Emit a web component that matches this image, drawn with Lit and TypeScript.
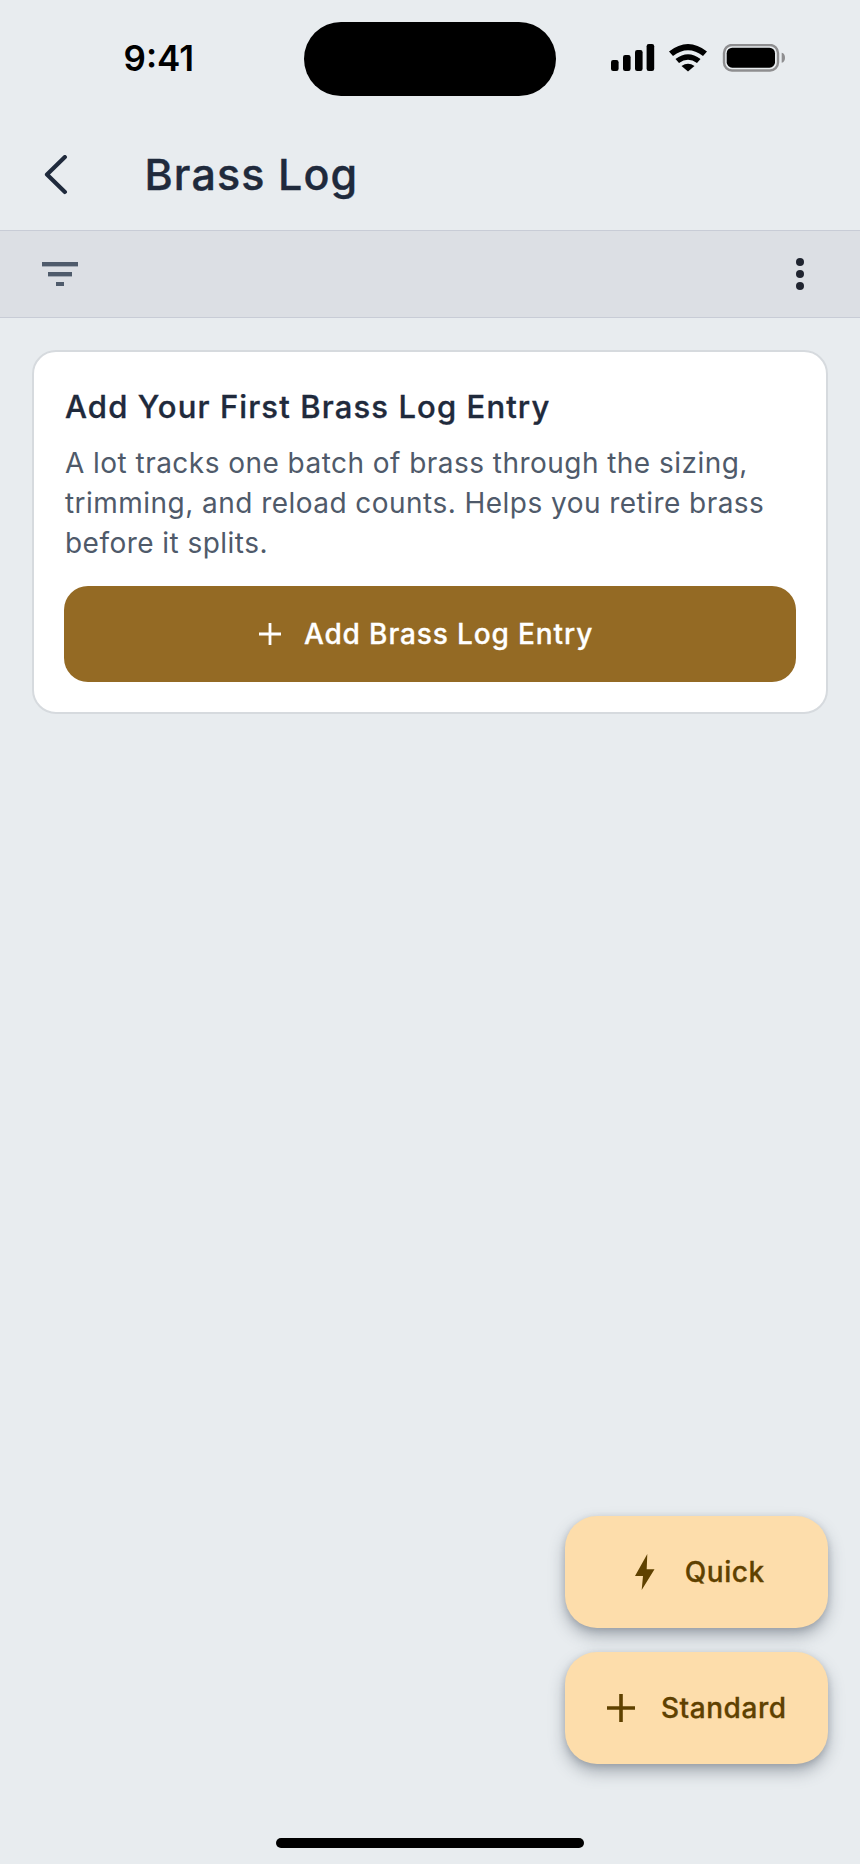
import { LitElement, html, css } from "lit";
import { customElement } from "lit/decorators.js";

@customElement("app-root")
export class AppRoot extends LitElement {
  static styles = css`
    :host { display: block; width: 860px; height: 1864px; font-family: Inter, "Liberation Sans", sans-serif; }
    * { box-sizing: border-box; }
    .page { position: relative; width: 860px; height: 1864px; background: #e8ecef; overflow: hidden; }
    .status { height: 120px; display: grid; grid-template-columns: 304px 252px 1fr; padding-top: 22px; align-items: start; }
    .time { font-size: 35px; line-height: 72px; font-weight: 600; color: #000; text-align: left; padding-left: 123.5px; }
    .island { height: 74px; background: #000; border-radius: 37px; }
    .sys { height: 74px; padding: 22px 0 0 55px; }
    .sys svg { display: block; }
    .appbar { height: 110px; display: flex; align-items: center; padding-left: 44px; }
    .back { width: 100.5px; height: 40px; display: block; flex: none; }
    .title { font-size: 43px; line-height: 52px; margin-bottom: 2px; font-weight: 500; -webkit-text-stroke: 0.4px #1f2a3c; color: #1f2a3c; letter-spacing: 1.1px; }
    .toolbar { height: 88px; background: #dcdfe4; border-top: 1.5px solid #c8ccd6; border-bottom: 1.5px solid #c8ccd6; display: flex; align-items: center; justify-content: space-between; padding: 0 56px 0 42px; }
    .toolbar svg { display: block; }
    .content { padding: 32px 32px 0; }
    .card { background: #fff; border: 2px solid #d6dade; border-radius: 24px; padding: 35px 30px 30px 31px; }
    .card h2 { margin: 0; font-size: 31px; line-height: 40px; font-weight: 500; -webkit-text-stroke: 0.35px #1f2a3c; color: #1f2a3c; letter-spacing: 1.12px; }
    .card p { margin: 16px 0 0; font-size: 28px; line-height: 40px; color: #4f5a6a; letter-spacing: 0.46px; }
    .cta { margin: 23px 0 0 -1px; height: 96px; padding-right: 8px; border-radius: 24px; background: #946a24; color: #fff; display: flex; align-items: center; justify-content: center; gap: 23px; font-size: 28px; font-weight: 500; -webkit-text-stroke: 0.3px #fff; letter-spacing: 0.88px; }
    .fabs { position: absolute; left: 564.5px; top: 1516px; width: 263.5px; display: flex; flex-direction: column; gap: 24px; }
    .fab { height: 112px; border-radius: 32px; background: #fdddab; color: #5f4100; display: flex; align-items: center; justify-content: center; font-size: 28px; font-weight: 500; -webkit-text-stroke: 0.3px #5f4100; letter-spacing: 0.55px; box-shadow: 0 8px 16px rgba(60, 70, 85, 0.38), 0 2px 6px rgba(60, 70, 85, 0.2); }
    .fab.quick { gap: 30px; padding-left: 7px; }
    .fab.standard { gap: 26px; padding-left: 1px; }
    .home { position: absolute; left: 276px; top: 1838px; width: 308px; height: 10px; border-radius: 5px; background: #000; }
  `;

  render() {
    return html`
      <div class="page">
        <div class="status">
          <div class="time">9:41</div>
          <div class="island"></div>
          <div class="sys">
            <svg width="176" height="30" viewBox="0 0 176 30">
              <rect x="0" y="16" width="7.6" height="11" rx="2.2" fill="#000"/>
              <rect x="12" y="11" width="7.6" height="16" rx="2.2" fill="#000"/>
              <rect x="24" y="6" width="7.6" height="21" rx="2.2" fill="#000"/>
              <rect x="35.6" y="0" width="7.6" height="27" rx="2.2" fill="#000"/>
              <path d="M58 7.5 Q77 -7.5 96 7.5 L92 12 Q77 0.5 62 12 Z" fill="#000"/>
              <path d="M64.5 15 Q77 5.5 89.5 15 L86 19 Q77 12.5 68 19 Z" fill="#000"/>
              <path d="M70.5 22 Q77 17.5 83.5 22 L77 27.5 Z" fill="#000"/>
              <rect x="113" y="1" width="54" height="25.5" rx="8" fill="none" stroke="#8e8e90" stroke-width="2.4"/>
              <rect x="115.7" y="3.7" width="48.3" height="20" rx="5.5" fill="#000"/>
              <path d="M170.7 8.7 C173 9.2 174 11 174 13.7 C174 16.4 173 18.2 170.7 18.7 Z" fill="#8e8e90"/>
            </svg>
          </div>
        </div>
        <div class="appbar">
          <svg class="back" viewBox="0 0 101 40" fill="none">
            <path d="M21 2 L3 19.5 L21 37" stroke="#1f2a3c" stroke-width="4.2" stroke-linecap="round" stroke-linejoin="round"/>
          </svg>
          <div class="title">Brass Log</div>
        </div>
        <div class="toolbar">
          <svg width="36" height="24" viewBox="0 0 36 24">
            <rect x="0" y="0" width="36" height="4.4" fill="#4f5b6b"/>
            <rect x="6" y="10" width="24" height="4.4" fill="#4f5b6b"/>
            <rect x="14" y="20" width="8" height="4" fill="#4f5b6b"/>
          </svg>
          <svg width="8" height="32" viewBox="0 0 8 32">
            <circle cx="4" cy="4" r="4" fill="#202530"/>
            <circle cx="4" cy="16" r="4" fill="#202530"/>
            <circle cx="4" cy="28" r="4" fill="#202530"/>
          </svg>
        </div>
        <div class="content">
          <div class="card">
            <h2>Add Your First Brass Log Entry</h2>
            <p>A lot tracks one batch of brass through the sizing, trimming, and reload counts. Helps you retire brass before it splits.</p>
            <div class="cta">
              <svg width="22" height="22" viewBox="0 0 22 22"><path d="M11 0V22M0 11H22" stroke="#fff" stroke-width="2.8"/></svg>
              <span>Add Brass Log Entry</span>
            </div>
          </div>
        </div>
        <div class="fabs">
          <div class="fab quick">
            <svg width="20" height="36" viewBox="0 0 20 36"><path d="M12.3 0 L0 22 H8 L6.7 36 L19.5 15.3 H11.7 Z" fill="#5f4100"/></svg>
            <span>Quick</span>
          </div>
          <div class="fab standard">
            <svg width="28" height="28" viewBox="0 0 28 28"><path d="M14 0V28M0 14H28" stroke="#5f4100" stroke-width="3.6"/></svg>
            <span>Standard</span>
          </div>
        </div>
        <div class="home"></div>
      </div>
    `;
  }
}
